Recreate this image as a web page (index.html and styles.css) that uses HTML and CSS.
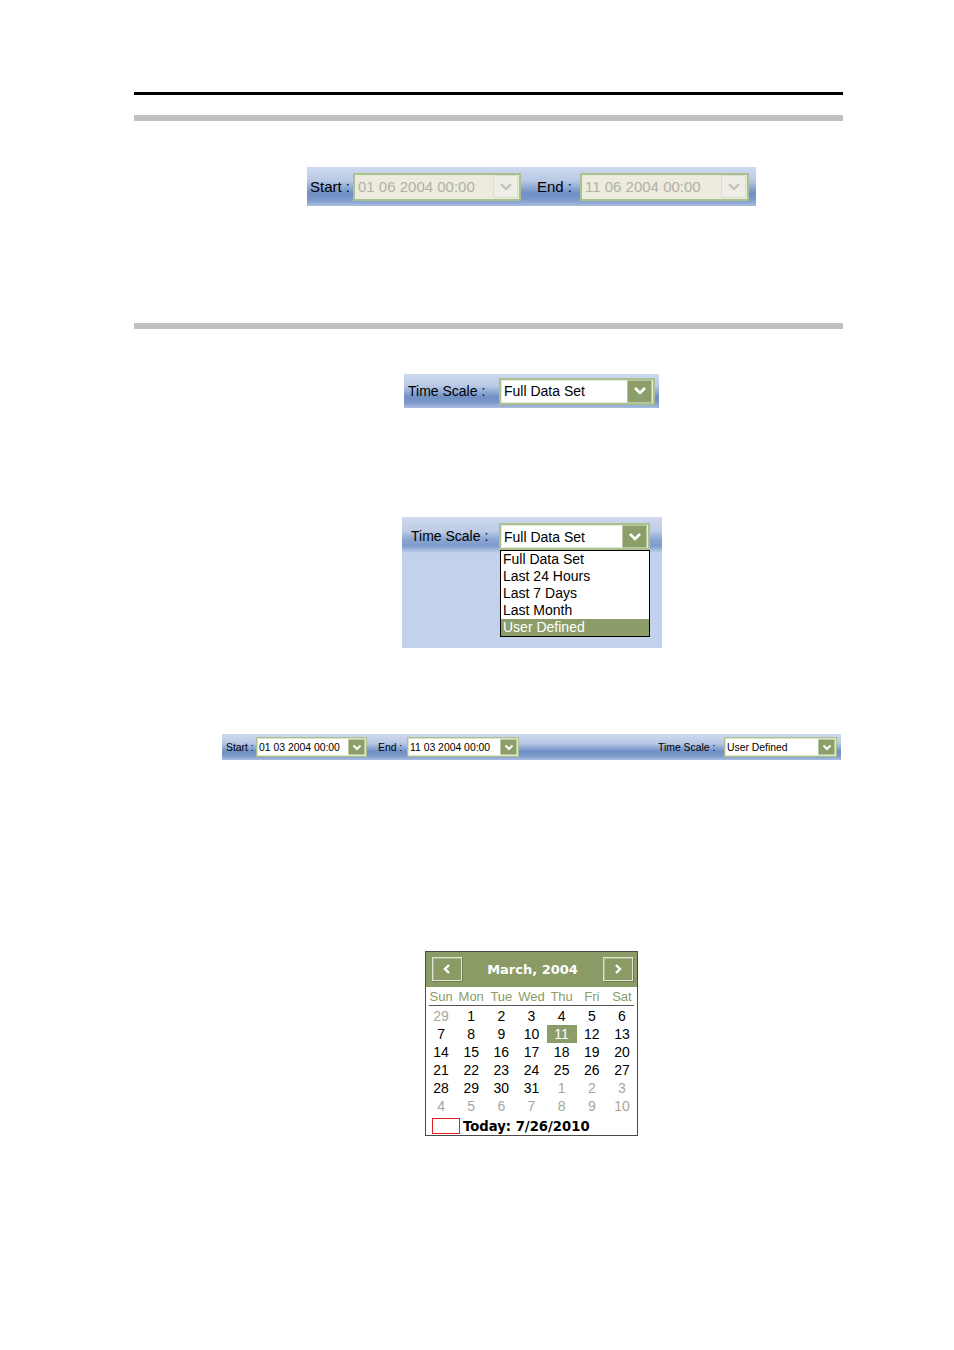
FILE: index.html
```html
<!DOCTYPE html>
<html>
<head>
<meta charset="utf-8">
<link rel="stylesheet" href="styles.css">
</head>
<body>
<div class="page">
  <div class="rule-black"></div>
  <div class="rule-gray r1"></div>

  <div class="tb tb1">
    <span class="lbl l-start1">Start :</span>
    <div class="field disabled w168">
      <span class="val">01 06 2004 00:00</span>
      <span class="btn btn-dis"><svg width="14" height="10" viewBox="0 0 14 10"><polyline points="2,2 7,7 12,2" fill="none" stroke="#c4c4bc" stroke-width="2.4"/></svg></span>
    </div>
    <span class="lbl l-end1">End :</span>
    <div class="field disabled w169">
      <span class="val">11 06 2004 00:00</span>
      <span class="btn btn-dis"><svg width="14" height="10" viewBox="0 0 14 10"><polyline points="2,2 7,7 12,2" fill="none" stroke="#c4c4bc" stroke-width="2.4"/></svg></span>
    </div>
  </div>

  <div class="rule-gray r2"></div>

  <div class="tb tb2">
    <span class="lbl l-ts2">Time Scale :</span>
    <div class="field w156">
      <span class="val">Full Data Set</span>
      <span class="btn btn-g"><svg width="14" height="10" viewBox="0 0 14 10"><polyline points="2,2 7,7 12,2" fill="none" stroke="#fff" stroke-width="2.6"/></svg></span>
    </div>
  </div>

  <div class="tb3">
    <div class="tb3-top">
      <span class="lbl l-ts3">Time Scale :</span>
      <div class="field w151">
        <span class="val">Full Data Set</span>
        <span class="btn btn-g"><svg width="14" height="10" viewBox="0 0 14 10"><polyline points="2,2 7,7 12,2" fill="none" stroke="#fff" stroke-width="2.6"/></svg></span>
      </div>
    </div>
    <ul class="list">
      <li>Full Data Set</li>
      <li>Last 24 Hours</li>
      <li>Last 7 Days</li>
      <li>Last Month</li>
      <li class="sel">User Defined</li>
    </ul>
  </div>

  <div class="tb tb4">
    <span class="lbl l-start4">Start :</span>
    <div class="field sm w111">
      <span class="val">01 03 2004 00:00</span>
      <span class="btn btn-g sbtn"><svg width="10" height="7" viewBox="0 0 10 7"><polyline points="1.5,1.5 5,5 8.5,1.5" fill="none" stroke="#fff" stroke-width="2"/></svg></span>
    </div>
    <span class="lbl l-end4">End :</span>
    <div class="field sm w112">
      <span class="val">11 03 2004 00:00</span>
      <span class="btn btn-g sbtn"><svg width="10" height="7" viewBox="0 0 10 7"><polyline points="1.5,1.5 5,5 8.5,1.5" fill="none" stroke="#fff" stroke-width="2"/></svg></span>
    </div>
    <span class="spacer"></span>
    <span class="lbl l-ts4">Time Scale :</span>
    <div class="field sm w113">
      <span class="val">User Defined</span>
      <span class="btn btn-g sbtn"><svg width="10" height="7" viewBox="0 0 10 7"><polyline points="1.5,1.5 5,5 8.5,1.5" fill="none" stroke="#fff" stroke-width="2"/></svg></span>
    </div>
  </div>

  <div class="cal">
    <div class="cal-head">
      <span class="nav"><svg width="10" height="12" viewBox="0 0 10 12"><polyline points="7,2 3,6 7,10" fill="none" stroke="#fff" stroke-width="2.4"/></svg></span>
      <span class="title">March, 2004</span>
      <span class="nav"><svg width="10" height="12" viewBox="0 0 10 12"><polyline points="3,2 7,6 3,10" fill="none" stroke="#fff" stroke-width="2.4"/></svg></span>
    </div>
    <div class="dow">
      <span>Sun</span><span>Mon</span><span>Tue</span><span>Wed</span><span>Thu</span><span>Fri</span><span>Sat</span>
    </div>
    <div class="dow-line"></div>
    <div class="days">
      <span class="o">29</span><span>1</span><span>2</span><span>3</span><span>4</span><span>5</span><span>6</span>
      <span>7</span><span>8</span><span>9</span><span>10</span><span class="cur">11</span><span>12</span><span>13</span>
      <span>14</span><span>15</span><span>16</span><span>17</span><span>18</span><span>19</span><span>20</span>
      <span>21</span><span>22</span><span>23</span><span>24</span><span>25</span><span>26</span><span>27</span>
      <span>28</span><span>29</span><span>30</span><span>31</span><span class="o">1</span><span class="o">2</span><span class="o">3</span>
      <span class="o">4</span><span class="o">5</span><span class="o">6</span><span class="o">7</span><span class="o">8</span><span class="o">9</span><span class="o">10</span>
    </div>
    <div class="today">
      <span class="tbox"></span>
      <span class="ttext">Today: 7/26/2010</span>
    </div>
  </div>
</div>
</body>
</html>
```

FILE: styles.css
```css
html, body {
  margin: 0;
  padding: 0;
  background: #fff;
}
body {
  font-family: "Liberation Sans", Arial, sans-serif;
  color: #000;
}
.page {
  width: 954px;
  height: 1350px;
  display: flex;
  flex-direction: column;
  align-items: flex-start;
}
.rule-black {
  margin-top: 92px;
  margin-left: 134px;
  width: 709px;
  height: 3px;
  background: #000;
}
.rule-gray {
  margin-left: 134px;
  width: 709px;
  height: 6px;
  background: #c0c0c0;
}
.r1 { margin-top: 20px; }
.r2 { margin-top: 117px; }

.tb {
  display: flex;
  align-items: center;
  box-sizing: border-box;
  background: linear-gradient(to bottom, #cfdaee 0%, #b9c9e4 35%, #8aa5d1 55%, #6f8fc5 68%, #7d99ca 84%, #a9bddf 100%);
}
.tb1 {
  margin-top: 46px;
  margin-left: 307px;
  width: 449px;
  height: 39px;
  font-size: 15px;
}
.tb2 {
  margin-top: 45px;
  margin-left: 404px;
  width: 255px;
  height: 34px;
  font-size: 14px;
}
.lbl {
  white-space: nowrap;
  color: #000;
  box-sizing: border-box;
  overflow: hidden;
}
.l-start1 { width: 46px; padding-left: 3px; }
.l-end1 { width: 59px; padding-left: 16px; }
.l-ts2 { width: 95px; padding-left: 4px; }
.l-ts3 { width: 97px; padding-left: 9px; }

.field {
  display: flex;
  align-items: center;
  box-sizing: border-box;
  background: #fff;
  border: 2px solid #aac08e;
  box-shadow: inset 0 0 0 1px #e6ecd8;
  padding-left: 3px;
  padding-right: 1px;
}
.field .val {
  flex: 1;
  white-space: nowrap;
  overflow: hidden;
}
.field.disabled {
  background: #ecebdd;
  color: #b2b1a6;
  height: 28px;
}
.w168 { width: 168px; }
.w169 { width: 169px; }
.w156 { width: 156px; height: 27px; }
.w151 { width: 151px; height: 27px; }

.btn {
  display: flex;
  align-items: center;
  justify-content: center;
  box-sizing: border-box;
  width: 25px;
  height: 23px;
}
.btn-dis {
  background: #efeee6;
  border: 1px solid #dcdcd2;
  border-radius: 2px;
}
.btn-g {
  background: #8c9f6a;
  border: 1px solid #b8c6a0;
  border-radius: 1px;
}

/* dropdown */
.tb3 {
  margin-top: 109px;
  margin-left: 402px;
  width: 260px;
  height: 131px;
  background: #c3d2ea;
  font-size: 14px;
  position: relative;
}
.tb3-top {
  height: 36px;
  display: flex;
  box-sizing: border-box;
  padding-top: 6px;
  align-items: flex-start;
  background: linear-gradient(to bottom, #cfdaee 0%, #bccbe5 40%, #8ba6d2 62%, #7f9bcc 80%, #c3d2ea 100%);
}
.tb3-top .lbl { margin-top: 5px; }
.list {
  position: absolute;
  left: 98px;
  top: 33px;
  width: 150px;
  height: 87px;
  margin: 0;
  padding: 0;
  list-style: none;
  box-sizing: border-box;
  background: #fff;
  border: 1px solid #000;
}
.list li {
  height: 17px;
  line-height: 17px;
  padding-left: 2px;
  white-space: nowrap;
}
.list li.sel {
  background: #8c9d6a;
  color: #fff;
}

/* toolbar 4 */
.tb4 {
  margin-top: 86px;
  margin-left: 222px;
  width: 619px;
  height: 26px;
  padding-right: 4px;
  font-size: 10.4px;
}
.l-start4 { width: 34px; padding-left: 4px; }
.l-end4 { width: 40px; padding-left: 11px; }
.l-ts4 { width: 66px; }
.spacer { flex: 1; }
.field.sm {
  height: 20px;
  padding-left: 2px;
  border-width: 1px;
  box-shadow: inset 0 0 0 1px #dce5cc;
}
.w111 { width: 111px; }
.w112 { width: 112px; }
.w113 { width: 113px; }
.sbtn {
  width: 17px;
  height: 16px;
}

/* calendar */
.cal {
  margin-top: 191px;
  margin-left: 425px;
  width: 213px;
  height: 185px;
  box-sizing: border-box;
  border: 1px solid #4a4a4a;
  background: #fff;
  display: flex;
  flex-direction: column;
}
.cal-head {
  height: 36px;
  background: #8b9b66;
  display: flex;
  align-items: center;
  justify-content: space-between;
  padding: 0 4px 0 6px;
}
.nav {
  width: 30px;
  height: 24px;
  box-sizing: border-box;
  border: 1px solid #dfe5d0;
  box-shadow: 1px 1px 0 #6f7d50, inset 1px 1px 0 #a8b48a;
  display: flex;
  align-items: center;
  justify-content: center;
}
.title {
  color: #fff;
  font-family: "DejaVu Sans", Verdana, sans-serif;
  font-weight: bold;
  font-size: 13px;
}
.dow {
  display: grid;
  grid-template-columns: repeat(7, 30.15px);
  height: 17px;
  margin-top: 1px;
  font-size: 13px;
  color: #8a9c64;
  line-height: 17px;
}
.dow span { text-align: center; white-space: nowrap; }
.dow-line {
  height: 1px;
  margin: 0 3px;
  background: #555;
}
.days {
  display: grid;
  grid-template-columns: repeat(7, 30.15px);
  grid-auto-rows: 18px;
  margin-top: 1px;
  font-size: 14px;
  line-height: 18px;
}
.days span {
  text-align: center;
}
.days .o { color: #a6a69e; }
.days .cur {
  background: #8c9d6a;
  color: #fff;
}
.today {
  display: flex;
  align-items: center;
  margin-top: 3px;
  padding-left: 6px;
  height: 18px;
}
.tbox {
  width: 28px;
  height: 16px;
  box-sizing: border-box;
  border: 1px solid #e02020;
  margin-right: 3px;
}
.ttext {
  font-family: "DejaVu Sans", Verdana, sans-serif;
  font-weight: bold;
  font-size: 13.2px;
  white-space: nowrap;
}
```
